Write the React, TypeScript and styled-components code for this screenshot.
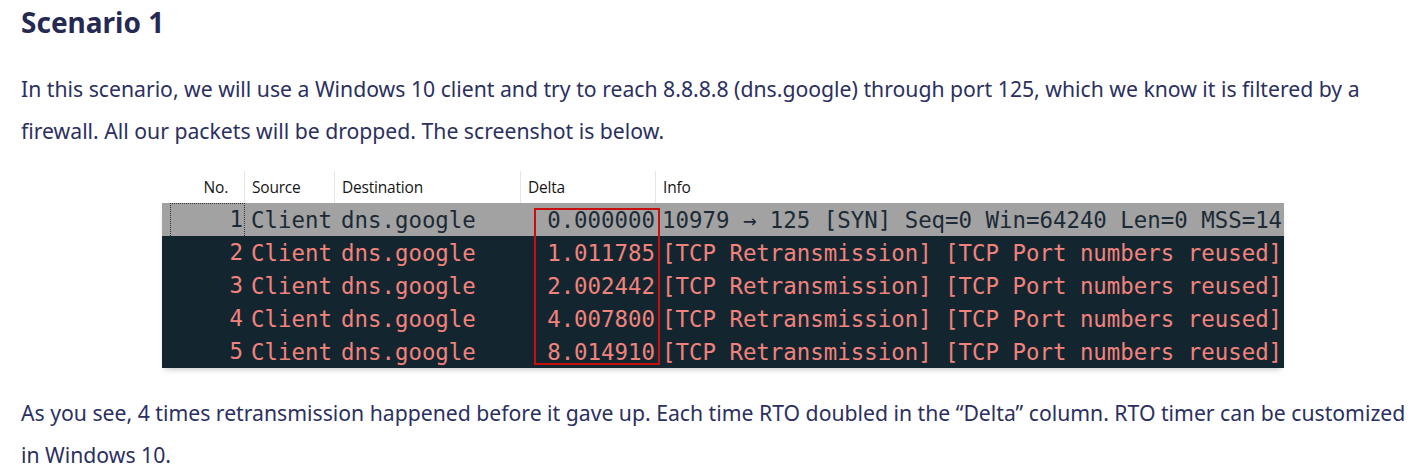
import React from "react";
import styled, { createGlobalStyle } from "styled-components";

const GlobalStyle = createGlobalStyle`
    body {
        margin: 0;
        background: #ffffff;
        font-family: "Noto Sans", "Open Sans", sans-serif;
        overflow: hidden;
    }
`;

type Row = {
    no: number;
    source: string;
    destination: string;
    delta: string;
    info: string;
};

const rows: Row[] = [
    {
        no: 1,
        source: "Client",
        destination: "dns.google",
        delta: "0.000000",
        info: "10979 → 125 [SYN] Seq=0 Win=64240 Len=0 MSS=14",
    },
    {
        no: 2,
        source: "Client",
        destination: "dns.google",
        delta: "1.011785",
        info: "[TCP Retransmission] [TCP Port numbers reused]",
    },
    {
        no: 3,
        source: "Client",
        destination: "dns.google",
        delta: "2.002442",
        info: "[TCP Retransmission] [TCP Port numbers reused]",
    },
    {
        no: 4,
        source: "Client",
        destination: "dns.google",
        delta: "4.007800",
        info: "[TCP Retransmission] [TCP Port numbers reused]",
    },
    {
        no: 5,
        source: "Client",
        destination: "dns.google",
        delta: "8.014910",
        info: "[TCP Retransmission] [TCP Port numbers reused]",
    },
];

export default function App() {
    return (
        <>
            <GlobalStyle />
            <Article>
                <Heading>Scenario 1</Heading>
                <Paragraph>
                    In this scenario, we will use a Windows 10 client and try to
                    reach 8.8.8.8 (dns.google) through port 125, which we know it
                    is filtered by a firewall. All our packets will be dropped.
                    The screenshot is below.
                </Paragraph>
                <PacketList />
                <Paragraph $top={24}>
                    As you see, 4 times retransmission happened before it gave
                    up. Each time RTO doubled in the “Delta” column. RTO timer
                    can be customized in Windows 10.
                </Paragraph>
            </Article>
        </>
    );
}

function PacketList() {
    return (
        <Figure>
            <HeaderRow>
                <HeaderCell $align="right">No.</HeaderCell>
                <HeaderCell>Source</HeaderCell>
                <HeaderCell>Destination</HeaderCell>
                <HeaderCell>Delta</HeaderCell>
                <HeaderCell $last>Info</HeaderCell>
            </HeaderRow>
            <Body>
                {rows.map((row, i) => {
                    const selected = i === 0;
                    return (
                        <PacketRow key={row.no} $selected={selected}>
                            <NoCell $focused={selected}>{row.no}</NoCell>
                            <Cell>{row.source}</Cell>
                            <Cell>{row.destination}</Cell>
                            <DeltaCell>{row.delta}</DeltaCell>
                            <Cell>{row.info}</Cell>
                        </PacketRow>
                    );
                })}
                {/* 스크린샷에 그려진 빨간 강조 박스 */}
                <Highlight />
            </Body>
        </Figure>
    );
}

const Article = styled.div`
    padding: 0 0 0 21px;
    width: 1392px;
    color: #2b3060;
`;

const Heading = styled.h2`
    margin: 0;
    font-size: 28px;
    line-height: 44px;
    font-weight: 700;
    color: #262a52;
`;

const Paragraph = styled.p<{ $top?: number }>`
    margin: ${(props) => props.$top ?? 24}px 0 0;
    font-size: 21.2px;
    line-height: 41.5px;
`;

// 패킷 목록 스크린샷
const columns = "83px 90px 186px 135px 628px";

const Figure = styled.div`
    margin: 20px 0 0 141px;
    width: 1122px;
    background: #ffffff;
`;

const HeaderRow = styled.div`
    display: grid;
    grid-template-columns: ${columns};
    height: 32px;
`;

const HeaderCell = styled.div<{ $align?: string; $last?: boolean }>`
    display: flex;
    align-items: center;
    justify-content: ${(props) =>
        props.$align === "right" ? "flex-end" : "flex-start"};
    padding: 0 ${(props) => (props.$align === "right" ? "16px" : "7px")};
    font-family: "Open Sans", "Noto Sans", sans-serif;
    font-size: 15.5px;
    letter-spacing: -0.2px;
    color: #151515;
    border-right: ${(props) => (props.$last ? "none" : "1px solid #e4e4e4")};
`;

const Body = styled.div`
    position: relative;
    box-shadow: 0 4px 6px -3px rgba(0, 0, 0, 0.25);
`;

const PacketRow = styled.div<{ $selected: boolean }>`
    display: grid;
    grid-template-columns: ${columns};
    height: 33px;
    align-items: center;
    background: ${(props) => (props.$selected ? "#a2a2a2" : "#132630")};
    color: ${(props) => (props.$selected ? "#1c2a36" : "#f2827c")};
    font-family: "DejaVu Sans Mono", "Liberation Mono", monospace;
    font-size: 22.4px;
    white-space: nowrap;
    overflow: hidden;
`;

const Cell = styled.div`
    padding: 0 0 0 6px;
    overflow: hidden;
    line-height: 33px;
`;

const NoCell = styled.div<{ $focused: boolean }>`
    height: 33px;
    line-height: 31px;
    margin-left: 8px;
    text-align: right;
    padding-right: 1px;
    border: 1px dotted
        ${(props) => (props.$focused ? "#333333" : "transparent")};
`;

const DeltaCell = styled.div`
    text-align: right;
    padding-right: 1px;
    line-height: 33px;
`;

const Highlight = styled.div`
    position: absolute;
    left: 372px;
    top: 5px;
    width: 122px;
    height: 153px;
    border: 2.5px solid #c90e0e;
    pointer-events: none;
`;
